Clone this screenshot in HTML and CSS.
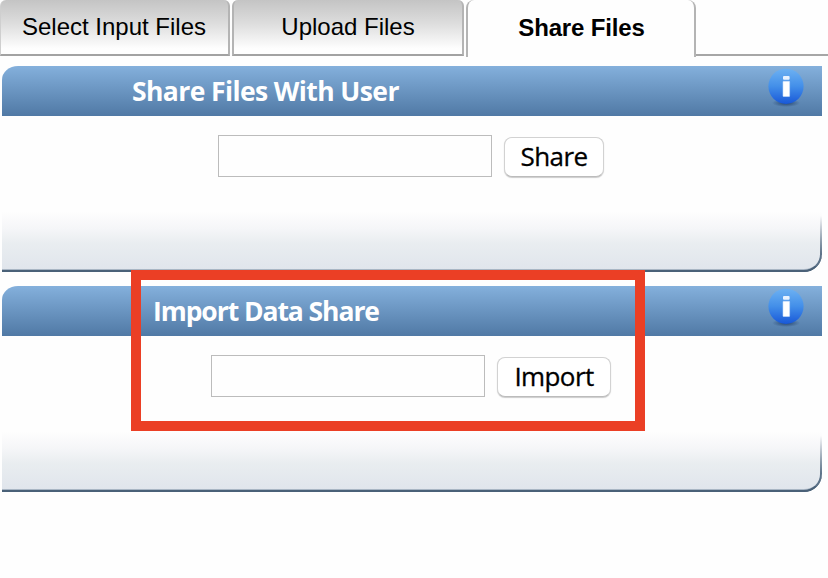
FILE: index.html
```html
<!DOCTYPE html>
<html lang="en">
<head>
<meta charset="utf-8">
<title>Share Files</title>
<link rel="stylesheet" href="styles.css">
</head>
<body>
<svg class="defs" width="0" height="0" aria-hidden="true">
  <defs>
    <linearGradient id="ball" x1="0" y1="0" x2="0" y2="1"><stop offset="0" stop-color="#6db1f2"/><stop offset=".5" stop-color="#438fe9"/><stop offset="1" stop-color="#1858d8"/></linearGradient>
    <radialGradient id="shade"><stop offset="0" stop-color="#17345f" stop-opacity=".8"/><stop offset="1" stop-color="#17345f" stop-opacity="0"/></radialGradient>
    <symbol id="info" viewBox="0 0 36 40">
      <ellipse cx="18" cy="35" rx="14" ry="4" fill="url(#shade)"/>
      <circle cx="18" cy="18.3" r="17.6" fill="url(#ball)"/>
      <rect x="15" y="8" width="6.6" height="3.8" rx="1" fill="#e8f2ff"/>
      <rect x="15" y="13.3" width="6.6" height="15.2" rx=".5" fill="#fff" stroke="#c5dcfb" stroke-width=".6"/>
    </symbol>
  </defs>
</svg>
<nav class="tabs">
  <a class="tab"><span class="select-label">Select Input Files</span></a>
  <a class="tab tab-upload"><span class="upload-label">Upload Files</span></a>
  <a class="tab tab-active"><span class="active-label">Share Files</span></a>
  <span class="tab-rest"></span>
</nav>
<main>
  <section class="panel">
    <header class="panel-head"><h2 class="share-title">Share Files With User</h2><svg class="info"><use href="#info"/></svg></header>
    <form class="row"><input class="field" type="text" aria-label="User"><button class="btn" type="button"><span class="share-text">Share</span></button></form>
    <div class="panel-foot"></div>
  </section>
  <section class="panel">
    <header class="panel-head head-import"><h2 class="import-title">Import Data Share</h2><svg class="info"><use href="#info"/></svg></header>
    <form class="row row-import"><input class="field" type="text" aria-label="Data share"><button class="btn btn-import" type="button"><span class="import-text">Import</span></button></form>
    <div class="panel-foot"></div>
    <div class="highlight"></div>
  </section>
</main>
</body>
</html>
```
FILE: styles.css
```css
* { box-sizing: border-box; }
body { margin: 0; background: #fefefe; overflow: hidden; color: #000; }
.defs { position: absolute; }
.tabs { display: flex; height: 66px; align-items: flex-start; font: 24px/30px "Liberation Sans", Arial, sans-serif; }
.tab {
  width: 230px; height: 56px; padding: 12px 1px 0 0; display: flex; justify-content: center; white-space: nowrap;
  background: linear-gradient(#c4c4c4, #dedede 45%, #fefefe 90%);
  border: 2px solid #b4b4b4; border-top: 0; border-bottom-color: #a2a2a2; border-left: 1px solid #cfcfcf;
  border-radius: 6px 6px 0 0;
}
.tab-upload { width: 232px; margin-left: 2px; padding-right: 0; border-left: 2px solid #b4b4b4; }
.tab-active {
  margin-left: 2px; height: 57px; padding: 13px 0 0 1px; background: #fefefe; font-weight: bold;
  border-left: 2px solid #b4b4b4; border-bottom: 0; border-radius: 8px 8px 0 0;
}
.active-label { letter-spacing: -0.15px; }
.tab-rest { flex: 1; height: 56px; border-bottom: 2px solid #a6a6a6; }
.panel { position: relative; width: 820px; height: 206px; margin: 0 0 14px 2px; }
.panel-head {
  height: 50px; padding: 2px 18px 0 130px; display: flex; justify-content: space-between; align-items: flex-start;
  background: linear-gradient(#84b0dc, #5079a5); border-top-left-radius: 16px 14px;
}
.head-import { padding-left: 151px; }
h2 { margin: 0; font: bold 26.5px/46px "Open Sans", sans-serif; color: #fff; white-space: nowrap; }
.share-title { letter-spacing: -0.6px; }
.import-title { letter-spacing: -1.07px; }
.info { width: 36px; height: 40px; display: block; }
.row { display: flex; gap: 12px; height: 95px; padding: 19px 0 0 216px; }
.row-import { padding-left: 209px; }
.field { width: 274px; height: 42px; border: 1px solid #bcbcbc; background: #fefefe; padding: 0 8px; outline: 0; font: 26px "Open Sans", sans-serif; }
.btn {
  width: 100px; height: 40px; margin-top: 2px; padding: 0 0 2px; border: 1px solid #d2d2d2; border-bottom-color: #bcbcbc;
  border-radius: 8px; background: #fff; box-shadow: 0 1px 1px #ccc; font: 26px/36px "Open Sans", sans-serif; color: #000; white-space: nowrap;
  -webkit-text-stroke: .3px #000;
}
.share-text { letter-spacing: -0.6px; }
.import-text { letter-spacing: -0.6px; }
.btn-import { width: 114px; }
.panel-foot {
  position: relative; height: 61px; border-bottom: 2px solid #4a6178; border-bottom-right-radius: 18px;
  background: linear-gradient(#fefefe, #f5f6f8 30%, #e9edf0 55%, #e0e5ec); box-shadow: inset 0 -1px #a9b6c4;
}
.panel-foot::after {
  content: ""; position: absolute; right: 0; top: 0; bottom: -2px; width: 24px;
  border-right: 2px solid #5d7389; border-bottom: 2px solid #4a6178; border-bottom-right-radius: 18px;
  mask-image: linear-gradient(transparent 8%, #000 70%);
}
.highlight { position: absolute; left: 129px; top: -16px; width: 514px; height: 161px; border: 10px solid #eb3f25; pointer-events: none; }
```
